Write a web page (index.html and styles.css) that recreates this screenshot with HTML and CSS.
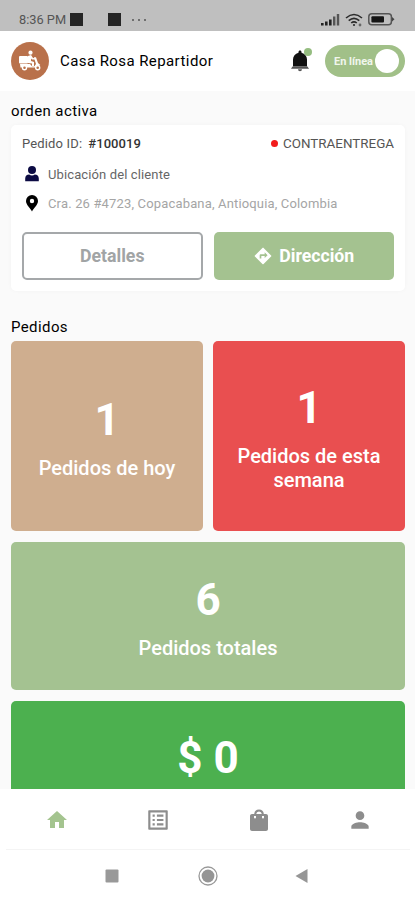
FILE: index.html
```html
<!DOCTYPE html>
<html lang="es">
<head>
    <meta charset="UTF-8">
    <meta name="viewport" content="width=device-width, initial-scale=1.0">
    <title>Casa Rosa Repartidor</title>
    <link rel="stylesheet" href="styles.css">
</head>
<body>
    <div class="status-bar">
        <span class="time">8:36 PM</span>
        <span class="block"></span>
        <span class="block second"></span>
        <svg class="dots" width="16" height="4" viewBox="0 0 16 4" fill="#555"><circle cx="2" cy="2" r="1"/><circle cx="8" cy="2" r="1"/><circle cx="14" cy="2" r="1"/></svg>
        <div class="status-icons">
            <svg width="19" height="13" viewBox="0 0 19 13">
                <g fill="#222"><rect x="0" y="10" width="2.6" height="2.5"/><rect x="4" y="8.5" width="2.6" height="4"/><rect x="8" y="6.5" width="2.6" height="6"/></g>
                <g fill="#555"><rect x="12" y="3.5" width="2.4" height="9"/><rect x="15.8" y="1" width="2.4" height="11.5"/></g>
            </svg>
            <svg width="18" height="14" viewBox="0 0 18 14" fill="none" stroke="#2b2b2b" stroke-width="1.6">
                <path d="M1 5 Q9 -2 17 5"/><path d="M3.7 7.6 Q9 3 14.3 7.6"/><path d="M6.2 10 Q9 7.6 11.8 10"/>
                <circle cx="9" cy="12" r="1.1" fill="#2b2b2b" stroke="none"/><circle cx="15" cy="12" r="1.4" fill="#666" stroke="none"/>
            </svg>
            <svg width="27" height="13" viewBox="0 0 27 13">
                <rect x="0.8" y="0.8" width="22.6" height="11" rx="3" fill="none" stroke="#555" stroke-width="1.5"/>
                <rect x="3.4" y="3.2" width="12.6" height="6.4" rx="1" fill="#151515"/>
                <path d="M24 4 L26.5 6.3 L24 8.6 Z" fill="#444"/>
            </svg>
        </div>
    </div>

    <header class="header">
        <div class="logo">
            <svg width="24" height="22" viewBox="0 0 24 22">
                <g fill="#fff">
                    <rect x="1" y="6" width="9" height="7.5" rx="1"/>
                    <circle cx="12.5" cy="2.7" r="2.1"/>
                    <path d="M10 6 L13 5 L15 8 L18 8.2 V9.6 L14 9.5 L13 8.6 V11 L16 12 V16 H14 V13.4 L10 13 Z"/>
                    <path d="M2 14 H12 L14 16.2 H16.5 L18 14 L16.6 9.8 L15.8 7.2 H18 L20 13 L22.3 15 L18.5 17.6 H2.5 Z"/>
                </g>
                <g fill="#b9714b" stroke="#fff" stroke-width="1.4"><circle cx="6.5" cy="17.8" r="2"/><circle cx="19.7" cy="17.8" r="2"/></g>
            </svg>
        </div>
        <h1 class="title">Casa Rosa Repartidor</h1>
        <div class="bell">
            <svg width="24" height="24" viewBox="0 0 24 24"><path fill="#111" d="M19 17.500v-7c0-3.100-2.100-5.800-5.500-6.800V3c0-.8-.7-1.500-1.500-1.500S10.500 2.200 10.500 3v.7C7.100 4.700 5 7.400 5 10.500v7z"/><path fill="#555" d="M4.500 17.500h15l1.500 2.200H3zM10 20.300h4a2 2 0 0 1-4 0z"/></svg>
            <span class="bell-badge"></span>
        </div>
        <div class="toggle">
            <span>En línea</span>
            <span class="knob"></span>
        </div>
    </header>

    <main class="content">
        <h2 class="section-title">orden activa</h2>
        <section class="order-card">
            <div class="order-row order-top">
                <span class="order-label">Pedido ID:</span>
                <span class="order-id">#100019</span>
                <span class="red-dot"></span>
                <span class="payment">CONTRAENTREGA</span>
            </div>
            <div class="order-row customer">
                <svg width="20" height="20" viewBox="0 0 20 20" fill="#0c0b43"><circle cx="10" cy="6" r="4"/><path d="M3.200 17.200v-2.700c0-2.600 1.600-4 4-4 .8.700 1.700 1 2.800 1s2-.3 2.800-1c2.400 0 4 1.400 4 4v2.700z"/></svg>
                <span>Ubicación del cliente</span>
            </div>
            <div class="order-row address">
                <svg width="20" height="20" viewBox="0 0 20 20"><path fill="#000" fill-rule="evenodd" d="M10 2a6 6 0 0 0-6 6c0 4 4.500 7 6 10.500C11.500 15 16 12 16 8a6 6 0 0 0-6-6zm0 3.800a2.200 2.200 0 1 1 0 4.400 2.200 2.200 0 0 1 0-4.400z"/></svg>
                <span>Cra. 26 #4723, Copacabana, Antioquia, Colombia</span>
            </div>
            <div class="order-actions">
                <button class="btn btn-outline">Detalles</button>
                <button class="btn btn-primary">
                    <svg width="20" height="20" viewBox="0 0 24 24" fill="#fff"><path d="M21.710 11.290l-9-9a1 1 0 0 0-1.410 0l-9 9a1 1 0 0 0 0 1.410l9 9c.39.39 1.020.39 1.410 0l9-9a1 1 0 0 0 0-1.410zM14 14.500V12h-4v3H8v-4c0-.55.45-1 1-1h5V7.500l3.500 3.500-3.500 3.500z"/></svg>
                    <span>Dirección</span>
                </button>
            </div>
        </section>

        <h2 class="section-title orders-title">Pedidos</h2>
        <section class="stats">
            <div class="stat today"><strong>1</strong><span>Pedidos de hoy</span></div>
            <div class="stat week"><strong>1</strong><span>Pedidos de esta semana</span></div>
            <div class="stat total"><strong>6</strong><span>Pedidos totales</span></div>
            <div class="stat money"><strong>$ 0</strong></div>
        </section>
    </main>

    <nav class="bottom-nav">
        <svg width="24" height="24" viewBox="0 0 24 24" fill="#a4c48f"><path d="M10 20v-6h4v6h5v-8h3L12 3 2 12h3v8z"/></svg>
        <svg width="26" height="26" viewBox="0 0 24 24" fill="#8d8d8d"><path d="M19 5v14H5V5h14m1.100-2H3.900c-.5 0-.9.4-.9.9v16.200c0 .4.400.9.9.9h16.200c.4 0 .9-.5.9-.9V3.900c0-.5-.5-.9-.9-.9zM11 7h6v2h-6V7zm0 4h6v2h-6v-2zm0 4h6v2h-6zM7 7h2v2H7zm0 4h2v2H7zm0 4h2v2H7z"/></svg>
        <svg width="24" height="24" viewBox="0 0 24 24" fill="#8d8d8d"><path fill-rule="evenodd" d="M19 6h-2.200A4.900 4.900 0 0 0 12 1.500 4.900 4.900 0 0 0 7.200 6H5c-1.100 0-2 .9-2 2v13c0 1.100.9 2 2 2h14c1.100 0 2-.9 2-2V8c0-1.100-.9-2-2-2zM12 3.500A2.900 2.900 0 0 1 14.800 6H9.200A2.900 2.900 0 0 1 12 3.500zM7 8h2v1.500a1 1 0 0 1-2 0zm8 0h2v1.500a1 1 0 0 1-2 0z"/></svg>
        <svg width="26" height="26" viewBox="0 0 24 24" fill="#8d8d8d"><path d="M12 12c2.210 0 4-1.790 4-4s-1.790-4-4-4-4 1.790-4 4 1.790 4 4 4zm0 2c-2.670 0-8 1.340-8 4v2h16v-2c0-2.660-5.330-4-8-4z"/></svg>
    </nav>

    <div class="system-nav">
        <svg width="20" height="20" viewBox="0 0 20 20"><rect x="3.500" y="3.500" width="13" height="13" rx="1" fill="#999"/></svg>
        <svg width="20" height="20" viewBox="0 0 20 20"><circle cx="10" cy="10" r="9" fill="none" stroke="#999" stroke-width="1.300"/><circle cx="10" cy="10" r="6.400" fill="#959595"/></svg>
        <svg width="20" height="20" viewBox="0 0 20 20"><path d="M14.500 3v14L2.500 10z" fill="#969696"/></svg>
    </div>
</body>
</html>
```
FILE: styles.css
```css
* {
    box-sizing: border-box;
}

body {
    display: flex;
    flex-direction: column;
    width: 415px;
    height: 900px;
    margin: 0;
    overflow: hidden;
    background: #fff;
    font-family: Roboto, "Liberation Sans", sans-serif;
}

h1, h2 {
    margin: 0;
}

svg {
    display: block;
    flex-shrink: 0;
}

.status-bar {
    display: flex;
    align-items: center;
    flex: 0 0 31px;
    padding: 8px 20px 0 19px;
    background: #bfbfbf;
}

.time {
    width: 51px;
    font-size: 12.8px;
    color: #555;
    white-space: nowrap;
}

.block {
    width: 13px;
    height: 13px;
    background: #252525;
}

.second {
    margin-left: 25px;
}

.dots {
    margin-left: 10px;
}

.status-icons {
    display: flex;
    align-items: center;
    gap: 5px;
    margin-left: auto;
}

.header {
    display: flex;
    align-items: center;
    flex: 0 0 60px;
    padding: 0 10px 0 11px;
}

.logo {
    display: flex;
    align-items: center;
    justify-content: center;
    width: 38px;
    height: 38px;
    border-radius: 50%;
    background: #b9714b;
}

.title {
    margin-left: 11px;
    font-size: 15px;
    font-weight: 400;
    letter-spacing: 0.42px;
    color: #000;
}

.bell {
    position: relative;
    margin-left: auto;
}

.bell-badge {
    position: absolute;
    top: -1px;
    right: 0;
    width: 8px;
    height: 8px;
    border-radius: 50%;
    background: #95bd80;
}

.toggle {
    display: flex;
    align-items: center;
    justify-content: space-between;
    width: 80px;
    height: 32px;
    margin-left: 13px;
    padding: 0 6px 0 9px;
    border-radius: 16px;
    background: #a1c088;
    color: #f1f6ed;
    font-size: 11px;
    font-weight: 700;
    white-space: nowrap;
}

.knob {
    width: 24px;
    height: 24px;
    flex-shrink: 0;
    border-radius: 50%;
    background: #fff;
}

.content {
    flex: 0 0 698px;
    padding: 10px 10px 0 11px;
    overflow: hidden;
    background: #fafafa;
}

.section-title {
    height: 20px;
    font-size: 15px;
    font-weight: 400;
    line-height: 20px;
    letter-spacing: 0.4px;
    color: #000;
}

.order-card {
    height: 166px;
    margin-top: 4px;
    padding: 8px 11px 0;
    border-radius: 5px;
    background: #fff;
    box-shadow: 0 0 4px rgba(0, 0, 0, 0.03);
}

.order-row {
    display: flex;
    align-items: center;
    height: 20px;
    white-space: nowrap;
}

.order-top {
    font-size: 13px;
    color: #555;
}

.order-label {
    letter-spacing: 0.15px;
}

.order-id {
    margin-left: 6px;
    font-weight: 500;
    letter-spacing: 0.1px;
    color: #333;
}

.payment {
    font-size: 13.4px;
}

.red-dot {
    width: 7px;
    height: 7px;
    margin-right: 5px;
    margin-left: auto;
    border-radius: 50%;
    background: #f21b1b;
}

.customer {
    gap: 6px;
    margin-top: 11px;
    font-size: 13px;
    letter-spacing: 0.12px;
    color: #666;
}

.address {
    gap: 6px;
    margin-top: 9px;
    font-size: 13px;
    letter-spacing: 0.16px;
    color: #a5a5a5;
}

.order-actions {
    display: grid;
    grid-template-columns: 1fr 1fr;
    gap: 11px;
    margin-top: 19px;
}

.btn {
    display: flex;
    align-items: center;
    justify-content: center;
    gap: 6px;
    height: 48px;
    padding: 0;
    border: 0;
    border-radius: 5px;
    font-family: inherit;
    font-size: 17.7px;
    font-weight: 700;
}

.btn-outline {
    border: 2px solid #a5a8aa;
    background: #fff;
    color: #a1a4a5;
}

.btn-primary {
    background: #a4c290;
    color: #fff;
}

.orders-title {
    margin-top: 26px;
}

.stats {
    display: grid;
    grid-template-columns: 1fr 1fr;
    grid-template-rows: 190px 148px 148px;
    gap: 11px 10px;
    margin-top: 4px;
}

.stat {
    display: flex;
    flex-direction: column;
    align-items: center;
    justify-content: center;
    gap: 10px;
    padding: 2px 20px 0;
    border-radius: 5px;
    color: #fff;
    text-align: center;
}

.stat strong {
    font-size: 44px;
    font-weight: 700;
    line-height: 52px;
}

.stat span {
    font-size: 20px;
    font-weight: 500;
    line-height: 24px;
}

.today {
    background: #cfae8f;
}

.week {
    background: #e94f50;
}

.total {
    grid-column: 1 / 3;
    background: #a4c291;
}

.money {
    grid-column: 1 / 3;
    justify-content: flex-start;
    padding-top: 31px;
    background: #4cb04f;
}

.bottom-nav {
    display: grid;
    grid-template-columns: repeat(4, 1fr);
    place-items: center;
    flex: 0 0 61px;
    margin: 0 5px 0 6px;
    padding-top: 1px;
    border-bottom: 1px solid #f4f4f4;
}

.system-nav {
    display: flex;
    align-items: center;
    justify-content: space-between;
    flex: 0 0 50px;
    padding: 1px 102px 0;
}
```
